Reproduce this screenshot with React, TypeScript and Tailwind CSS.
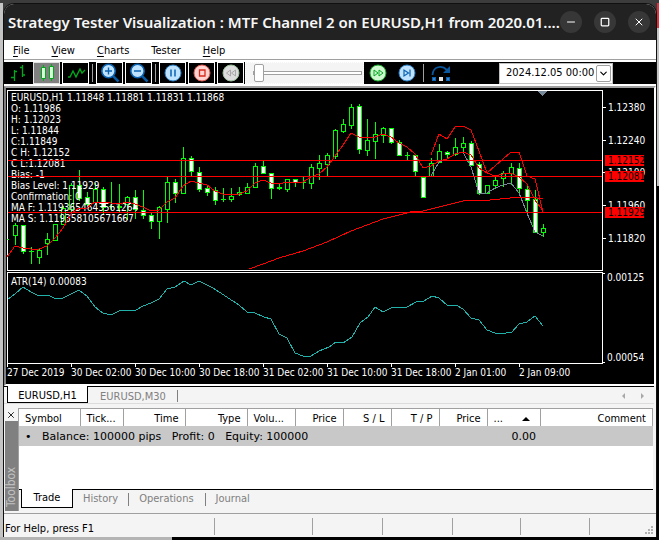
import { useState } from "react";
import type { ReactNode } from "react";
import { ChevronDown, Minus, Square, X } from "lucide-react";

// [high, body top, body bottom, low, kind] in pane pixels, one candle every 8px
type Candle = [number, number, number, number, "up" | "down"];

const candles: Candle[] = [
  [133, 135, 145, 154, "up"],
  [135, 135, 161, 163, "down"],
  [157, 161, 161, 173, "up"],
  [158, 160, 167, 173, "up"],
  [143, 149, 153, 164, "up"],
  [134, 134, 150, 150, "up"],
  [116, 118, 134, 134, "up"],
  [93, 95, 119, 122, "up"],
  [80, 95, 108, 110, "down"],
  [102, 107, 114, 115, "down"],
  [93, 99, 112, 114, "up"],
  [97, 99, 117, 123, "down"],
  [92, 116, 116, 119, "up"],
  [94, 116, 117, 121, "up"],
  [106, 107, 114, 129, "up"],
  [100, 107, 119, 128, "down"],
  [100, 120, 125, 128, "down"],
  [123, 125, 131, 138, "down"],
  [116, 117, 131, 148, "up"],
  [87, 92, 119, 132, "up"],
  [89, 92, 103, 112, "down"],
  [57, 68, 103, 103, "up"],
  [66, 68, 81, 85, "down"],
  [77, 82, 99, 101, "down"],
  [96, 98, 102, 105, "down"],
  [97, 100, 110, 114, "down"],
  [98, 109, 109, 111, "up"],
  [98, 106, 109, 111, "up"],
  [97, 102, 104, 105, "up"],
  [93, 97, 103, 103, "up"],
  [73, 76, 97, 97, "up"],
  [71, 76, 83, 83, "down"],
  [83, 83, 98, 108, "down"],
  [93, 97, 98, 99, "down"],
  [89, 89, 99, 101, "up"],
  [89, 89, 92, 96, "down"],
  [86, 92, 92, 98, "up"],
  [74, 77, 93, 98, "up"],
  [65, 73, 78, 89, "up"],
  [63, 65, 74, 85, "up"],
  [39, 40, 66, 68, "up"],
  [29, 34, 41, 42, "up"],
  [14, 17, 35, 38, "up"],
  [14, 16, 59, 63, "down"],
  [29, 50, 60, 65, "up"],
  [32, 44, 51, 68, "up"],
  [37, 38, 45, 52, "up"],
  [38, 38, 52, 53, "down"],
  [50, 52, 65, 65, "down"],
  [62, 65, 65, 70, "up"],
  [65, 65, 81, 86, "down"],
  [86, 87, 107, 107, "down"],
  [68, 73, 86, 86, "up"],
  [54, 61, 72, 72, "up"],
  [61, 62, 64, 68, "down"],
  [48, 57, 64, 65, "up"],
  [47, 53, 57, 61, "up"],
  [51, 53, 75, 75, "down"],
  [72, 74, 103, 104, "down"],
  [95, 95, 103, 103, "up"],
  [86, 90, 95, 98, "up"],
  [81, 83, 88, 96, "up"],
  [73, 77, 83, 94, "up"],
  [73, 78, 98, 103, "down"],
  [94, 99, 110, 123, "down"],
  [100, 109, 142, 142, "down"],
  [134, 138, 142, 146, "up"],
];

// fast moving average, one value per candle starting one bar before the first
const fastMa = [
  167, 156, 158, 159, 159, 156, 148, 138, 124, 118, 118, 112, 112, 113, 114, 112, 114, 117, 121,
  120, 112, 108, 96, 91, 93, 95, 101, 104, 104, 104, 101, 93, 90, 93, 94, 92, 92, 92, 87, 84, 77,
  66, 55, 43, 47, 48, 47, 44, 47, 53, 57, 64, 78, 76, 71, 69, 64, 62, 65, 78, 83, 86, 84, 83, 87,
  94, 110, 121,
];

const slowMa =
  "242,179 256,174 272,168 296,161 320,152 344,141 376,129 400,123 406,121 416,121 456,111 483,110 503,108 523,107 536,109";
const upperBand =
  "424,65 432,44 440,49 448,37 456,36 464,40 472,61 480,83 504,62 512,62 520,86 528,89 536,122";
const lowerBand =
  "424,86 432,72 440,69 448,64 456,62 464,77 472,103 480,103 488,98 496,95 504,93 512,103 520,123 528,142 536,146";
const atr =
  "1,27 8,22 16,15 24,20 32,24 41,23 49,27 56,26 72,18 80,24 88,35 96,41 104,43 112,39 120,38 129,38 136,34 144,31 152,27 160,17 168,15 177,9 184,13 192,9 206,16 232,33 240,40 248,41 257,45 264,47 272,62 280,66 288,81 296,84 304,84 312,79 322,75 329,70 336,71 345,65 353,51 361,45 368,35 376,40 384,36 400,35 409,30 417,29 425,24 432,26 441,34 449,33 456,37 464,46 472,48 480,58 488,61 499,61 505,60 512,52 520,50 528,44 536,54";

const levels = [
  { y: 70, price: "1.12152" },
  { y: 86, price: "1.12081" },
  { y: 122, price: "1.11929" },
];
const prices = [
  { y: 17, price: "1.12380" },
  { y: 50, price: "1.12240" },
  { y: 82, price: "1.12100" },
  { y: 115, price: "1.11960" },
  { y: 148, price: "1.11820" },
];
const times = [
  "27 Dec 2019",
  "30 Dec 02:00",
  "30 Dec 10:00",
  "30 Dec 18:00",
  "31 Dec 02:00",
  "31 Dec 10:00",
  "31 Dec 18:00",
  "2 Jan 01:00",
  "2 Jan 09:00",
];
const info = [
  "EURUSD,H1 1.11848 1.11881 1.11831 1.11868",
  "O: 1.11986",
  "H: 1.12023",
  "L: 1.11844",
  "C:1.11849",
  "C H: 1.12152",
  "C L:1.12081",
  "Bias: -1",
  "Bias Level: 1.11929",
  "Confirmation: 0",
  "MA F: 1.1193654643561264",
  "MA S: 1.119358105671667",
];

function Chart() {
  return (
    <svg
      viewBox="0 0 648 296"
      className="block w-full bg-black font-['DejaVu_Sans_Condensed','DejaVu_Sans',sans-serif] text-[10px]"
      fill="none"
      shapeRendering="crispEdges"
    >
      {/* Price pane */}
      <g transform="translate(1 2)">
        <rect x="0.5" y="0.5" width="595" height="180" stroke="#fff" />
        <path d="M530 1h11l-5.500 5z" fill="#778899" />
        <path d="M0 149.500h2" stroke="#0f0" />
        {candles.map(([high, top, bottom, low, kind], i) => {
          const x = 8 + i * 8;
          return (
            <g key={i}>
              <rect x={x} y={high} width="1" height={low - high + 1} fill="#0f0" />
              <rect x={x - 2} y={top} width="5" height={bottom - top + 1} fill="#0f0" />
              {bottom - top > 1 && (
                <rect
                  x={x - 1}
                  y={top + 1}
                  width="3"
                  height={bottom - top - 1}
                  fill={kind === "up" ? "#000" : "#fff"}
                />
              )}
            </g>
          );
        })}
        <g fill="#fff">
          {info.map((line, i) => (
            <text key={line} x="4" y={11 + i * 11}>
              {line}
            </text>
          ))}
        </g>
        <polyline points={lowerBand} stroke="#778899" />
        <g stroke="#f00">
          <polyline points={fastMa.map((y, i) => `${i * 8},${y}`).join(" ")} />
          <polyline points={slowMa} />
          <polyline points={upperBand} />
        </g>
        <g fill="#fff">
          {prices.map((p) => (
            <g key={p.price}>
              <path d={`M596 ${p.y + 0.5}h3`} stroke="#fff" />
              <text x="601" y={p.y + 4}>
                {p.price}
              </text>
            </g>
          ))}
        </g>
        {levels.map((l) => (
          <g key={l.price}>
            <path d={`M1 ${l.y + 0.5}h594`} stroke="#f00" />
            <rect x="598" y={l.y - 5} width="39" height="11" fill="#f00" />
            <text x="601" y={l.y + 4} fill="#000">
              {l.price}
            </text>
          </g>
        ))}
      </g>

      {/* Indicator pane */}
      <g transform="translate(1 184)">
        <path d="M598 1.500H595.500M0.500 0.500H595.500V91.500H0.500zM598 90.500H595.500" stroke="#fff" />
        <polyline points={atr} stroke="#20b2aa" />
        <g fill="#fff">
          <text x="4" y="13">ATR(14) 0.00083</text>
          <text x="600" y="9">0.00125</text>
          <text x="600" y="89">0.00054</text>
          {times.map((t, i) => (
            <g key={t}>
              <path d={`M${i * 64 + 0.5} 92v3`} stroke="#fff" />
              <text x={i * 64} y="104">
                {t}
              </text>
            </g>
          ))}
        </g>
      </g>
    </svg>
  );
}

function TitleButton({ label, children }: { label: string; children: ReactNode }) {
  return (
    <button
      aria-label={label}
      className="flex size-[22px] items-center justify-center rounded-full bg-[#373737] text-white"
    >
      {children}
    </button>
  );
}

function ToolButton({
  label,
  look = "framed",
  children,
}: {
  label: string;
  look?: "framed" | "plain" | "pressed";
  children: ReactNode;
}) {
  const looks = {
    framed: "border-white",
    plain: "border-transparent",
    pressed: "border-[#e3e3e3] bg-[#808080]",
  };
  return (
    <button
      aria-label={label}
      className={`flex h-[22px] w-[27px] shrink-0 items-center justify-center border ${looks[look]}`}
    >
      <svg viewBox="0 0 20 20" className="size-5" fill="none">
        {children}
      </svg>
    </button>
  );
}

function Divider() {
  return <div className="mx-px h-[18px] w-px shrink-0 bg-[#a0a0a0]" />;
}

function Magnifier({ plus }: { plus?: boolean }) {
  return (
    <>
      <path d="M13 13l5.500 5.500" stroke="#0a58a0" strokeWidth="2.500" />
      <circle cx="8.500" cy="8" r="6.700" fill="#bfe3ff" stroke="#0a62b0" strokeWidth="1.600" />
      <path d={plus ? "M5 8h7M8.500 4.500v7" : "M5 8h7"} stroke="#0a62b0" strokeWidth="1.400" />
    </>
  );
}

function Toolbar() {
  const [speed, setSpeed] = useState(0);
  return (
    <div className="flex h-[22px] items-center bg-black">
      <div className="flex items-center gap-[2px]">
        <ToolButton label="Bar chart" look="plain">
          <path d="M3 14.500h3.500M6.500 7v11M6.500 8.500H9M12 4.500h2.500M14.500 2v12M14.500 12H17" stroke="#00a81c" strokeWidth="1.300" />
        </ToolButton>
        <ToolButton label="Candlesticks" look="pressed">
          <path d="M6.500 2v16M14.500 1v17" stroke="#00a81c" />
          <path d="M4.500 4.500h4v11h-4zM12.500 3.500h4v12h-4z" fill="#d8ffd8" stroke="#00a81c" />
        </ToolButton>
        <ToolButton label="Line chart">
          <path d="M2 14h2l3-6 3 6 4-8 2 4 3-3" stroke="#00a81c" strokeWidth="1.400" />
        </ToolButton>
        <Divider />
        <ToolButton label="Zoom in">
          <Magnifier plus />
        </ToolButton>
        <ToolButton label="Zoom out">
          <Magnifier />
        </ToolButton>
        <Divider />
        <ToolButton label="Pause">
          <circle cx="10" cy="10" r="8" fill="#bfe3ff" stroke="#2a7fc4" />
          <path d="M8 6.500v7M12 6.500v7" stroke="#0a62b0" strokeWidth="1.500" />
        </ToolButton>
        <ToolButton label="Stop">
          <circle cx="10" cy="10" r="8" fill="#ffd3cf" stroke="#e05a50" />
          <path d="M7.500 7h5.500v6H7.500z" stroke="#d8281c" strokeWidth="1.300" />
        </ToolButton>
        <ToolButton label="Slower">
          <circle cx="10" cy="10" r="8" fill="#dcdcdc" stroke="#9cc09c" />
          <path d="M9.500 7v6l-4-3zM14.500 7v6l-4-3z" stroke="#a8a8a8" />
        </ToolButton>
      </div>
      <input
        type="range"
        aria-label="Speed"
        value={speed}
        onChange={(e) => setSpeed(Number(e.target.value))}
        className="ml-px h-[22px] w-[119px] shrink-0 appearance-none border border-dotted border-black bg-[#f4f4f4] pr-px pl-[7px] outline-1 -outline-offset-1 outline-white outline-dotted [&::-webkit-slider-runnable-track]:h-[4px] [&::-webkit-slider-runnable-track]:border [&::-webkit-slider-runnable-track]:border-[#a0a0a0] [&::-webkit-slider-runnable-track]:bg-white [&::-webkit-slider-thumb]:-mt-[8px] [&::-webkit-slider-thumb]:h-[18px] [&::-webkit-slider-thumb]:w-[10px] [&::-webkit-slider-thumb]:appearance-none [&::-webkit-slider-thumb]:rounded-[2px] [&::-webkit-slider-thumb]:border [&::-webkit-slider-thumb]:border-[#a0a0a0] [&::-webkit-slider-thumb]:bg-white"
      />
      <div className="flex items-center gap-[2px]">
        <ToolButton label="Faster" look="plain">
          <circle cx="10" cy="10" r="8" fill="#d0f8d0" stroke="#18b02c" />
          <path d="M6 7v6l4-3zM11 7v6l4-3z" stroke="#00a81c" />
        </ToolButton>
        <ToolButton label="Step" look="plain">
          <circle cx="10" cy="10" r="8" fill="#bfe3ff" stroke="#2a7fc4" />
          <path d="M7 7v6l4.500-3zM13 6.500v7" stroke="#0a62b0" strokeWidth="1.200" />
        </ToolButton>
        <Divider />
        <ToolButton label="Skip to date" look="plain">
          <path d="M1.500 12C2 3 11 2 16 7" stroke="#0a58a0" strokeWidth="1.800" />
          <path d="M19 3v7h-7z" fill="#0a58a0" />
          <path d="M1 14h4v4H1zM15 14h4v4h-4z" fill="#0a62b0" />
          <path d="M2.500 15.500h1v1h-1zM16.500 15.500h1v1h-1z" fill="#cfe8ff" />
          <path d="M8 14h4v4H8z" fill="#e3e3e3" />
        </ToolButton>
      </div>
      <div className="relative mr-[43px] ml-auto flex h-[21px] w-[114px] items-center bg-white">
        <select
          aria-label="Date"
          className="h-full w-full appearance-none border border-[#c0c0c0] pl-[6px] text-[11px]"
        >
          <option>2024.12.05 00:00</option>
        </select>
        <span className="pointer-events-none absolute right-[2px] flex h-[17px] w-[15px] items-center justify-center rounded-[2px] border border-[#a0a0a0] bg-white">
          <ChevronDown size={11} strokeWidth={2.5} />
        </span>
      </div>
    </div>
  );
}

const columns = [
  { name: "Symbol", className: "w-[61px] text-left" },
  { name: "Tick...", className: "w-[43px] text-left" },
  { name: "Time", className: "w-[62px] text-right" },
  { name: "Type", className: "w-[62px] text-right" },
  { name: "Volu...", className: "w-[48px] text-left" },
  { name: "Price", className: "w-[48px] text-right" },
  { name: "S / L", className: "w-[48px] text-right" },
  { name: "T / P", className: "w-[48px] text-right" },
  { name: "Price ", className: "w-[48px] text-right" },
  { name: "...", className: "w-[53px] text-left" },
  { name: "Comment", className: "text-right" },
];

function Toolbox() {
  return (
    <div className="mt-1 flex h-[103px] pr-[3px]">
      <div className="flex w-[14px] flex-col items-center">
        <button aria-label="Close toolbox" className="flex h-[13px] w-full items-center justify-center">
          <X size={10} strokeWidth={2} />
        </button>
        <div className="flex w-[13px] flex-1 rotate-180 items-center bg-[#808080] pt-1 text-[12px] leading-[13px] text-[#c0c0c0] [writing-mode:vertical-rl]">
          Toolbox
        </div>
      </div>
      <div className="flex min-w-0 flex-1 flex-col border-t border-l border-[#a0a0a0]">
        <div className="flex-1 bg-white">
          <table className="w-full table-fixed border-collapse">
            <thead>
              <tr className="h-[17px]">
                {columns.map((c) => (
                  <th
                    key={c.name}
                    className={`border-r border-[#a0a0a0] px-[6px] pt-[2px] leading-[15px] font-normal ${c.className}`}
                  >
                    {c.name === "..." ? (
                      <span className="flex items-center justify-between pr-[4px]">
                        {c.name}
                        <svg viewBox="0 0 8 4" className="h-1 w-2">
                          <path d="M4 0l4 4H0z" />
                        </svg>
                      </span>
                    ) : (
                      c.name
                    )}
                  </th>
                ))}
              </tr>
            </thead>
            <tbody>
              <tr className="h-5 bg-[#c8c8c8] font-['DejaVu_Sans',sans-serif]">
                <td colSpan={9} className="pt-[2px] pl-[6px] whitespace-pre">
                  {"•   Balance: 100000 pips   Profit: 0   Equity: 100000"}
                </td>
                <td className="pt-[2px] pr-[4px] text-right">0.00</td>
                <td />
              </tr>
            </tbody>
          </table>
        </div>
        <div className="flex h-[22px] items-start border-t border-black text-[#808080]">
          <button className="-mt-px ml-[2px] h-[19px] w-[52px] border-x border-b border-black bg-white text-black">
            Trade
          </button>
          <button className="h-[18px] px-[10px]">History</button>
          <button className="relative h-[18px] px-[11px] before:absolute before:top-[3px] before:left-0 before:h-[13px] before:w-px before:bg-[#808080]">
            Operations
          </button>
          <button className="relative h-[18px] px-[11px] before:absolute before:top-[3px] before:left-0 before:h-[13px] before:w-px before:bg-[#808080]">
            Journal
          </button>
        </div>
      </div>
    </div>
  );
}

const menus = ["File", "View", "Charts", "Tester", "Help"];

export default function App() {
  return (
    <div className="min-h-screen overflow-hidden bg-[#3c3c3c] pt-[3px] font-['DejaVu_Sans_Condensed','DejaVu_Sans',sans-serif] text-[11px] text-black">
      <div className="flex">
        {/* Desktop showing at the left */}
        <div className="w-[3px] bg-[#c4c4c4]" />

        <main className="min-w-0 flex-1 overflow-hidden rounded-t-[11px] border-x border-t border-[#101010] bg-[#f4f4f4]">
          <header className="flex h-[36px] items-center gap-3 bg-[#222222] pr-[6px] pl-1">
            <h1 className="min-w-0 flex-1 font-['Noto_Sans',sans-serif] text-[15px] font-semibold whitespace-nowrap text-[#f7f7f7]">
              Strategy Tester Visualization : MTF Channel 2 on EURUSD,H1 from 2020.01....
            </h1>
            <div className="flex gap-3">
              <TitleButton label="Minimize">
                <Minus size={12} />
              </TitleButton>
              <TitleButton label="Maximize">
                <Square size={10} strokeWidth={3} />
              </TitleButton>
              <TitleButton label="Close">
                <X size={12} />
              </TitleButton>
            </div>
          </header>

          <nav className="flex h-[20px] items-center gap-[22px] border-b border-[#a0a0a0] bg-white pt-1 pl-[9px]">
            {menus.map((m) => (
              <button key={m}>
                {m === "Tester" ? (
                  m
                ) : (
                  <>
                    <span className="underline underline-offset-2">{m[0]}</span>
                    {m.slice(1)}
                  </>
                )}
              </button>
            ))}
          </nav>

          <div className="border-y-2 border-white">
            <Toolbar />
          </div>

          <div className="border-2 border-t-[#a0a0a0] border-r-white border-b-white border-l-[#808080]">
            <Chart />
          </div>

          {/* Chart tabs */}
          <div className="mr-[2px] flex h-[18px] items-start border-t border-b border-t-black border-b-[#dcdcdc] pl-[3px] text-[#808080]">
            <button className="-mt-px h-[17px] w-[81px] border-x border-b border-black bg-white pt-[2px] text-black">
              EURUSD,H1
            </button>
            <button className="relative h-[16px] w-[90px] pt-[2px] after:absolute after:top-[3px] after:right-0 after:h-[12px] after:w-px after:bg-[#808080]">
              EURUSD,M30
            </button>
            <div className="ml-auto flex h-[17px] items-center gap-4 pr-[10px]">
              <button aria-label="Previous tab">
                <svg viewBox="0 0 3 6" className="h-[6px] w-[3px]" fill="#a8a8a8">
                  <path d="M3 0v6L0 3z" />
                </svg>
              </button>
              <button aria-label="Next tab">
                <svg viewBox="0 0 3 6" className="h-[6px] w-[3px]" fill="#a8a8a8">
                  <path d="M0 0v6l3-3z" />
                </svg>
              </button>
            </div>
          </div>

          <Toolbox />

          <footer className="mt-[2px] flex h-[24px] items-stretch border-t border-[#a0a0a0] pt-1 pb-[2px]">
            <span className="w-[211px] border-r border-[#a0a0a0] pt-px pl-px leading-[20px]">
              For Help, press F1
            </span>
            <span className="w-[98px] border-r border-[#a0a0a0]" />
            <span className="w-[70px] border-r border-[#a0a0a0]" />
            <span className="w-[70px] border-r border-[#a0a0a0]" />
            <span className="w-[68px] border-r border-[#a0a0a0]" />
            <span className="w-[69px] border-r border-[#a0a0a0]" />
            <svg viewBox="0 0 9 9" className="mr-[2px] ml-auto size-[9px] self-end" fill="#b0b0b0">
              <path d="M6 0h2v2H6zM3 3h2v2H3zM6 3h2v2H6zM0 6h2v2H0zM3 6h2v2H3zM6 6h2v2H6z" />
            </svg>
          </footer>
        </main>

        {/* Desktop showing at the right */}
        <div className="flex w-[2px] flex-col bg-black">
          <div className="h-[25px] bg-[#e0303c]" />
          <div className="h-[158px] bg-[#c4c4c4]" />
        </div>
      </div>

      <div className="flex h-[3px] bg-black">
        <div className="w-[172px] bg-[#b4b4b4]" />
      </div>
    </div>
  );
}
